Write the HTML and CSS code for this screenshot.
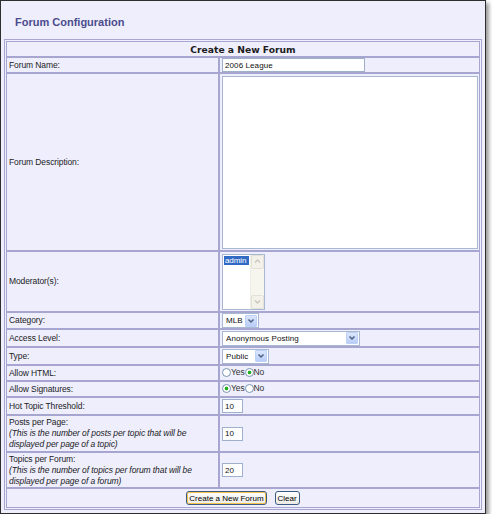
FILE: index.html
```html
<!DOCTYPE html>
<html>
<head>
<meta charset="utf-8">
<title>Forum Configuration</title>
<link rel="stylesheet" href="styles.css">
</head>
<body>
<div class="win">
  <h1 class="title">Forum Configuration</h1>
  <form class="form">
    <table class="cfg">
      <tr class="r-16"><th colspan="2">Create a New Forum</th></tr>
      <tr class="r-16">
        <td class="lbl">Forum Name:</td>
        <td class="val"><input class="txt name" type="text" value="2006 League"></td>
      </tr>
      <tr class="r-desc">
        <td class="lbl">Forum Description:</td>
        <td class="val"><textarea class="desc"></textarea></td>
      </tr>
      <tr class="r-mod">
        <td class="lbl">Moderator(s):</td>
        <td class="val">
          <div class="listbox">
            <div class="lb-items"><span class="lb-opt">admin</span></div>
            <div class="lb-bar">
              <span class="lb-btn"><svg width="11" height="11" viewBox="0 0 11 11"><path d="M3 6.5 L5.5 4 L8 6.5" fill="none" stroke="#c9c7b8" stroke-width="1.3"/></svg></span>
              <span class="lb-btn"><svg width="11" height="11" viewBox="0 0 11 11"><path d="M3 4.5 L5.5 7 L8 4.5" fill="none" stroke="#c9c7b8" stroke-width="1.3"/></svg></span>
            </div>
          </div>
        </td>
      </tr>
      <tr class="r-17">
        <td class="lbl">Category:</td>
        <td class="val">
          <span class="sel sel-cat"><select class="sel-in"><option>MLB</option></select><span class="sel-btn"><svg width="10" height="10" viewBox="0 0 10 10"><path d="M2.5 3.5 L5 6 L7.5 3.5" fill="none" stroke="#4d6185" stroke-width="1.5"/></svg></span></span>
        </td>
      </tr>
      <tr class="r-18">
        <td class="lbl">Access Level:</td>
        <td class="val">
          <span class="sel sel-acc"><select class="sel-in"><option>Anonymous Posting</option></select><span class="sel-btn"><svg width="10" height="10" viewBox="0 0 10 10"><path d="M2.5 3.5 L5 6 L7.5 3.5" fill="none" stroke="#4d6185" stroke-width="1.5"/></svg></span></span>
        </td>
      </tr>
      <tr class="r-18">
        <td class="lbl">Type:</td>
        <td class="val">
          <span class="sel sel-type"><select class="sel-in"><option>Public</option></select><span class="sel-btn"><svg width="10" height="10" viewBox="0 0 10 10"><path d="M2.5 3.5 L5 6 L7.5 3.5" fill="none" stroke="#4d6185" stroke-width="1.5"/></svg></span></span>
        </td>
      </tr>
      <tr class="r-16">
        <td class="lbl">Allow HTML:</td>
        <td class="val"><label class="opt"><input class="rd" type="radio" name="html">Yes</label><label class="opt"><input class="rd" type="radio" name="html" checked>No</label></td>
      </tr>
      <tr class="r-16">
        <td class="lbl">Allow Signatures:</td>
        <td class="val"><label class="opt"><input class="rd" type="radio" name="sig" checked>Yes</label><label class="opt"><input class="rd" type="radio" name="sig">No</label></td>
      </tr>
      <tr class="r-18">
        <td class="lbl">Hot Topic Threshold:</td>
        <td class="val"><input class="txt num" type="text" value="10"></td>
      </tr>
      <tr class="r-37">
        <td class="lbl">Posts per Page:<br><em>(This is the number of posts per topic that will be<br>displayed per page of a topic)</em></td>
        <td class="val"><input class="txt num" type="text" value="10"></td>
      </tr>
      <tr class="r-36">
        <td class="lbl">Topics per Forum:<br><em>(This is the number of topics per forum that will be<br>displayed per page of a forum)</em></td>
        <td class="val"><input class="txt num" type="text" value="20"></td>
      </tr>
      <tr class="r-btn">
        <td class="actions" colspan="2"><button class="btn btn-default" type="submit">Create a New Forum</button><button class="btn" type="reset">Clear</button></td>
      </tr>
    </table>
  </form>
</div>
</body>
</html>
```

FILE: styles.css
```css
body {
  margin: 0;
  background: #ffffff;
  font-family: "Liberation Sans", Arial, sans-serif;
}

.win {
  box-sizing: border-box;
  width: 486px;
  height: 514px;
  border: 1px solid #2e2e2e;
  background: #eeeefc;
  box-shadow: 3px 3px 4px rgba(0, 0, 0, 0.4);
  padding: 0 3px;
}

.title {
  box-sizing: border-box;
  margin: 0;
  height: 38px;
  padding: 15px 0 0 11px;
  font: bold 11px/13px "Liberation Sans", Arial, sans-serif;
  color: #4b4b8d;
}

.form {
  margin: 0;
}

.cfg {
  box-sizing: border-box;
  width: 478px;
  border: 1px solid #a6a6d0;
  border-collapse: separate;
  border-spacing: 0;
  padding: 1px;
}

.cfg th,
.cfg td {
  border: 1px solid #a6a6d0;
  padding: 0 2px;
  font-size: 8.5px;
  line-height: 11px;
  letter-spacing: -0.1px;
  color: #1c1c1c;
  vertical-align: middle;
  text-align: left;
}

.cfg th {
  text-align: center;
  font-family: "DejaVu Sans", "Liberation Sans", sans-serif;
  font-weight: bold;
  font-size: 9.2px;
  letter-spacing: 0;
}

.cfg td.lbl {
  width: 208px;
}

.cfg td.val {
  padding: 0 1px;
}

.cfg em {
  font-style: italic;
}

.r-16 { height: 16px; }
.r-17 { height: 17px; }
.r-18 { height: 18px; }
.r-36 { height: 36px; }
.r-37 { height: 37px; }
.r-desc { height: 178px; }
.r-mod { height: 61px; }
.r-btn { height: 20px; }

.txt {
  box-sizing: border-box;
  height: 14px;
  margin: 0 0 0 1px;
  padding: 0 2px;
  border: 1px solid #9fb0cc;
  background: #ffffff;
  font: 8px "Liberation Sans", Arial, sans-serif;
  letter-spacing: 0.1px;
  color: #111;
  vertical-align: middle;
}

.name {
  width: 143px;
}

.num {
  width: 21px;
}

.desc {
  box-sizing: border-box;
  display: block;
  width: 256px;
  height: 173px;
  margin: 0 0 0 1px;
  border: 1px solid #a9b8d2;
  background: #ffffff;
  resize: none;
}

.listbox {
  box-sizing: border-box;
  display: flex;
  width: 43px;
  height: 56px;
  margin-left: 1px;
  border: 1px solid #a9b8d2;
  background: #ffffff;
}

.lb-items {
  flex: 1;
  padding: 1px;
}

.lb-opt {
  display: block;
  background: #316ac5;
  color: #ffffff;
  font-size: 8px;
  line-height: 9px;
  padding: 0 1px;
}

.lb-bar {
  width: 13px;
  display: flex;
  flex-direction: column;
  justify-content: space-between;
  background: #f6f5ee;
  border-left: 1px solid #efeee6;
}

.lb-btn {
  display: block;
  height: 12px;
  border: 1px solid #e4e2d6;
  border-radius: 2px;
  background: #f3f2ea;
}

.lb-btn svg {
  display: block;
}

.sel {
  box-sizing: border-box;
  display: inline-flex;
  align-items: center;
  height: 15px;
  margin-left: 1px;
  border: 1px solid #a9b8d2;
  background: #ffffff;
  vertical-align: middle;
}

.sel-cat { width: 37px; }
.sel-acc { width: 138px; }
.sel-type { width: 47px; }

.sel-in {
  flex: 1;
  min-width: 0;
  appearance: none;
  -webkit-appearance: none;
  border: none;
  background: transparent;
  padding: 0 0 0 3px;
  margin: 0;
  font: 8px "Liberation Sans", Arial, sans-serif;
  letter-spacing: 0.1px;
  color: #111;
}

.sel-btn {
  box-sizing: border-box;
  width: 12px;
  height: 12px;
  margin-right: 1px;
  display: flex;
  align-items: center;
  justify-content: center;
  border: 1px solid #bdd0f6;
  border-radius: 1px;
  background: linear-gradient(#dbe6fd, #b9cdf8);
}

.sel-btn svg {
  display: block;
}

.opt {
  display: inline-flex;
  align-items: center;
  font-size: 8.5px;
  color: #333;
}

.opt:first-child {
  margin-left: 1px;
}

.rd {
  appearance: none;
  -webkit-appearance: none;
  width: 9px;
  height: 9px;
  margin: 0;
  border: 1px solid #7d95b2;
  border-radius: 50%;
  background: #ffffff;
}

.rd:checked {
  background: radial-gradient(circle, #22b022 0, #22b022 1.6px, #ffffff 2.2px);
}

.cfg td.actions {
  text-align: center;
}

.btn {
  box-sizing: border-box;
  height: 14px;
  margin: 0 4px;
  padding: 0 2px;
  border: 1px solid #3b5a82;
  border-radius: 3px;
  background: linear-gradient(#ffffff, #ecebe4);
  font: 8px "Liberation Sans", Arial, sans-serif;
  color: #000;
  vertical-align: middle;
}

.btn-default {
  box-shadow: inset 0 0 0 1px #f7c44a;
}
```
